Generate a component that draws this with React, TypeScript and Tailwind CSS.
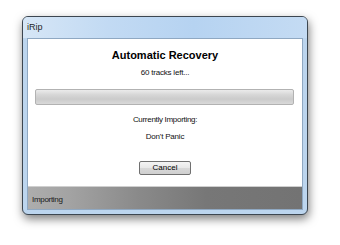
const RecoveryDialog = () => {
  return (
    <div className="w-[340px] h-[245px] bg-white pt-[16px] pl-[22px] font-['Liberation_Sans',Arial,sans-serif] text-[#111]">
      {/* Window frame */}
      <div className="w-[286px] h-[199px] rounded-[6px] border border-[#3c4650] bg-[#bcd5ee] shadow-[1px_4px_10px_rgba(0,0,0,0.5)] flex flex-col overflow-hidden">
        {/* Title bar */}
        <div className="h-[21px] shrink-0 bg-[linear-gradient(90deg,#d6e6f6_0%,#c2daf3_30%,#b6d3f1_60%,#c4dbf3_100%)] pl-[4px] pt-[5px]">
          <div className="text-[9px] leading-[11px] text-[#1e1e1e]">iRip</div>
        </div>

        {/* Client area */}
        <div className="mx-[4px] h-[172px] border border-[#8fa8c2] flex flex-col">
          <div className="h-[147px] bg-white flex flex-col items-center pt-[10px]">
            <div className="text-[11px] leading-[13px] font-bold text-black">
              Automatic Recovery
            </div>
            <div className="mt-[6px] text-[8px] leading-[10px] tracking-[-0.2px]">
              60 tracks left...
            </div>

            {/* Progress bar */}
            <div className="mt-[11px] self-start ml-[7px] w-[259px] h-[16px] rounded-[2px] border border-[#b2b2b2] bg-[linear-gradient(180deg,#ebebeb_0%,#d6d6d6_35%,#cbcbcb_65%,#d9d9d9_100%)]" />

            <div className="mt-[10px] text-[8px] leading-[10px] tracking-[-0.3px]">
              Currently Importing:
            </div>
            <div className="mt-[7px] text-[8px] leading-[10px] tracking-[-0.2px]">
              Don't Panic
            </div>

            <button className="mt-[19px] w-[52px] h-[14px] rounded-[2px] border border-[#707070] bg-[linear-gradient(180deg,#f4f4f4_0%,#e8e8e8_48%,#d8d8d8_52%,#cfcfcf_100%)] text-[8px] leading-[10px] text-black flex items-center justify-center">
              Cancel
            </button>
          </div>

          {/* Status strip */}
          <div className="flex-1 border-t border-[#cfcfcf] bg-[linear-gradient(90deg,#adadad_0%,#a3a3a3_15%,#8a8a8a_40%,#777_65%,#737373_100%)] pl-[4px] pt-[8px]">
            <div className="text-[8px] leading-[10px] tracking-[-0.3px] text-[#1a1a1a]">
              Importing
            </div>
          </div>
        </div>
      </div>
    </div>
  );
};

export default function App() {
  return <RecoveryDialog />;
}
